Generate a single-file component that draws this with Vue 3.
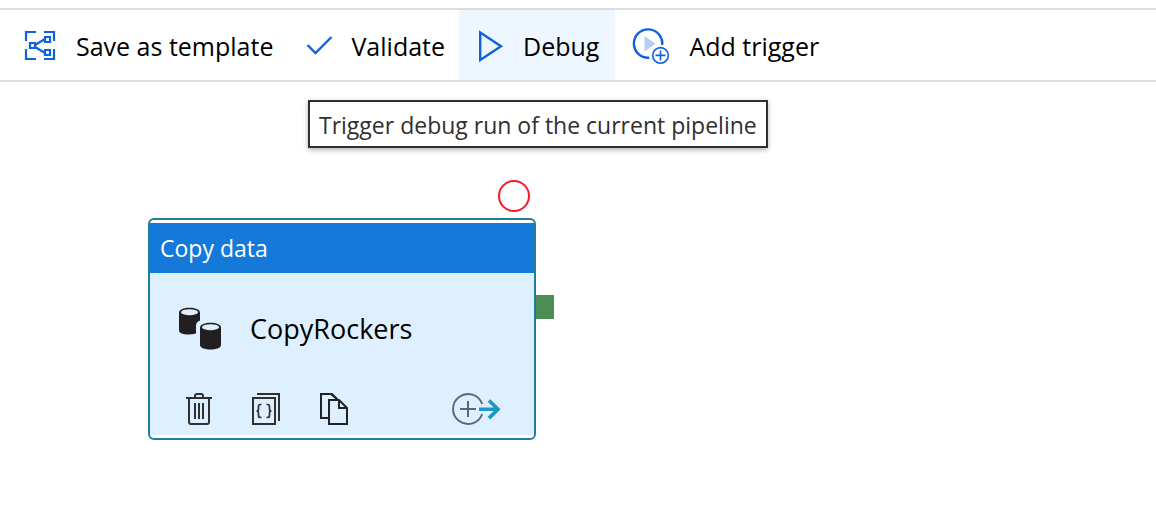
<script setup>
const tooltip = 'Trigger debug run of the current pipeline'
</script>

<template>
  <div class="editor">
    <div class="toolbar" role="toolbar" aria-label="Pipeline">
      <button type="button" class="tool">
        <svg class="icon save" viewBox="0 0 36 36" fill="none" stroke="#1062dc" stroke-width="2.200" aria-hidden="true">
          <path d="M2 13V4h10M20 4h10v9M30 21v10H20M12 31H2V21" />
          <path d="M11 17l10-6M11 19l10 6" />
          <path d="M6 15h5v5H6zM21 9h5v5h-5zM21 22h5v5h-5z" />
        </svg>
        <span>Save as template</span>
      </button>
      <button type="button" class="tool">
        <svg class="icon" viewBox="0 0 32 36" fill="none" stroke="#1062dc" stroke-width="2.4" aria-hidden="true">
          <path d="M4.500 17l8 8L28.500 9" />
        </svg>
        <span>Validate</span>
      </button>
      <button type="button" class="tool active" aria-describedby="debug-tip">
        <svg class="icon" viewBox="0 0 32 36" fill="none" stroke="#1062dc" stroke-width="2.400" aria-hidden="true">
          <path d="M5.200 4.500v27.400L26 18.200z" />
        </svg>
        <span>Debug</span>
      </button>
      <button type="button" class="tool">
        <svg class="icon trigger" viewBox="0 0 42 36" fill="none" stroke="#1062dc" aria-hidden="true">
          <path d="M13.500 8v15.500l11-7.700z" fill="#b3cff2" stroke="none" />
          <path d="M31.200 17A14.200 14.200 0 1 0 18.300 29.700" stroke-width="2.400" />
          <circle cx="29.500" cy="27.400" r="7.800" stroke-width="1.600" />
          <path d="M29.500 22.400v10M24.500 27.400h10" stroke-width="1.600" />
        </svg>
        <span>Add trigger</span>
      </button>
    </div>

    <main class="canvas">
      <div id="debug-tip" class="tooltip" role="tooltip">{{ tooltip }}</div>

      <article class="node">
        <span class="breakpoint"></span>
        <span class="port"></span>
        <header class="node-type">Copy data</header>
        <div class="node-body">
          <div class="node-name">
            <svg class="database" viewBox="0 0 44 44" fill="#231f20" aria-hidden="true">
              <path d="M1 5.500C1-1 22-1 22 5.500v8c-3 1-4 3-4 5v8c-7 2-17 1-17-3z" />
              <ellipse cx="11.500" cy="5.200" rx="8.500" ry="3" fill="#deefff" />
              <path d="M22 20.500c0-6.500 21-6.500 21 0V38c0 6-21 6-21 0z" />
              <ellipse cx="32.500" cy="20.200" rx="8.500" ry="3" fill="#deefff" />
            </svg>
            <span>CopyRockers</span>
          </div>
          <div class="actions">
            <button type="button" aria-label="Delete">
              <svg viewBox="0 0 32 36" fill="none" stroke="#303030" stroke-width="2" aria-hidden="true">
                <path d="M4 7h26M7 7v24q0 2 2 2h16q2 0 2-2V7M13 7V5q0-2 2-2h4q2 0 2 2v2" />
                <path d="M13 12v16M17 12v16M21 12v16" />
              </svg>
            </button>
            <button type="button" aria-label="View code">
              <svg viewBox="0 0 32 36" fill="none" stroke="#303030" stroke-width="2" aria-hidden="true">
                <path d="M3 7h22v26H3zM7 3h22v27" />
                <path d="M11.500 13.500h-1q-2 0-2 2v2.500q0 2-2 2q2 0 2 2v2.500q0 2 2 2h1M16.500 13.500h1q2 0 2 2v2.500q0 2 2 2q-2 0-2 2v2.500q0 2-2 2h-1" stroke-width="1.700" />
              </svg>
            </button>
            <button type="button" aria-label="Clone">
              <svg viewBox="0 0 32 36" fill="none" stroke="#1f2326" stroke-width="2" aria-hidden="true">
                <path d="M11 27H3V3h11l5 5M11 9h10l8 8v16H11zM21 9v8h8M13 3l7 6" />
              </svg>
            </button>
            <button type="button" class="add-output" aria-label="Add output">
              <svg viewBox="0 0 52 36" fill="none" aria-hidden="true">
                <path d="M32.200 13A15 15 0 1 0 32.200 23" stroke="#596579" stroke-width="1.900" />
                <path d="M18 10v16M10 18h16" stroke="#596579" stroke-width="2" />
                <path d="M29 18.300h20M39 9.500l9 8.800-9 8.800" stroke="#e6eff2" stroke-width="6" />
                <path d="M29 18.300h20M39 9.500l9 8.800-9 8.800" stroke="#1998c8" stroke-width="3.600" />
              </svg>
            </button>
          </div>
        </div>
      </article>
    </main>
  </div>
</template>

<style>
body {
  margin: 0;
  background: #fff;
}
</style>

<style scoped>
.editor {
  padding-top: 8px;
  font-family: "Open Sans", "Noto Sans", sans-serif;
  color: #000;
}

button {
  padding: 0;
  border: 0;
  background: none;
  color: inherit;
  font: inherit;
}

.toolbar {
  display: flex;
  height: 70px;
  padding-left: 8px;
  border-top: 2px solid #dcdcdc;
  border-bottom: 2px solid #dcdcdc;
}

.tool {
  display: flex;
  align-items: center;
  gap: 16px;
  padding: 2px 14px 0 16px;
  font-size: 25px;
  line-height: 32px;
  white-space: nowrap;
}

.tool.active {
  padding-right: 16px;
  background: #eef6ff;
}

.icon {
  flex: none;
  width: 32px;
  height: 36px;
}

.icon.save {
  width: 36px;
}

.icon.trigger {
  width: 42px;
}

.canvas {
  position: relative;
  min-height: 440px;
}

.tooltip {
  position: absolute;
  top: 18px;
  left: 308px;
  padding: 7px 9px 5px;
  border: 2px solid #303030;
  background: #fff;
  box-shadow: 0 2px 5px rgba(0, 0, 0, 0.3);
  color: #303030;
  font-size: 23px;
  line-height: 32px;
  white-space: nowrap;
}

.node {
  position: absolute;
  top: 136px;
  left: 148px;
  box-sizing: border-box;
  width: 388px;
  padding: 3px 0;
  border: 2px solid #1f7d9d;
  border-radius: 6px;
  background: #fff;
}

.breakpoint {
  position: absolute;
  top: -40px;
  right: 4px;
  box-sizing: border-box;
  width: 32px;
  height: 32px;
  border: 2px solid #f5182a;
  border-radius: 50%;
}

.port {
  position: absolute;
  top: 75px;
  left: 100%;
  width: 18px;
  height: 24px;
  margin-left: 2px;
  background: #4b8d54;
}

.node-type {
  padding: 9px 10px;
  background: #1579d9;
  color: #fff;
  font-size: 23px;
  line-height: 32px;
}

.node-body {
  padding: 34px 28px 8px;
  background: #deefff;
}

.node-name {
  display: flex;
  align-items: center;
  gap: 28px;
  font-size: 27px;
  line-height: 44px;
}

.database {
  width: 44px;
  height: 44px;
}

.actions {
  display: flex;
  gap: 36px;
  padding: 40px 4px 0;
}

.actions svg {
  display: block;
  height: 36px;
}

.add-output {
  margin-left: auto;
}
</style>
